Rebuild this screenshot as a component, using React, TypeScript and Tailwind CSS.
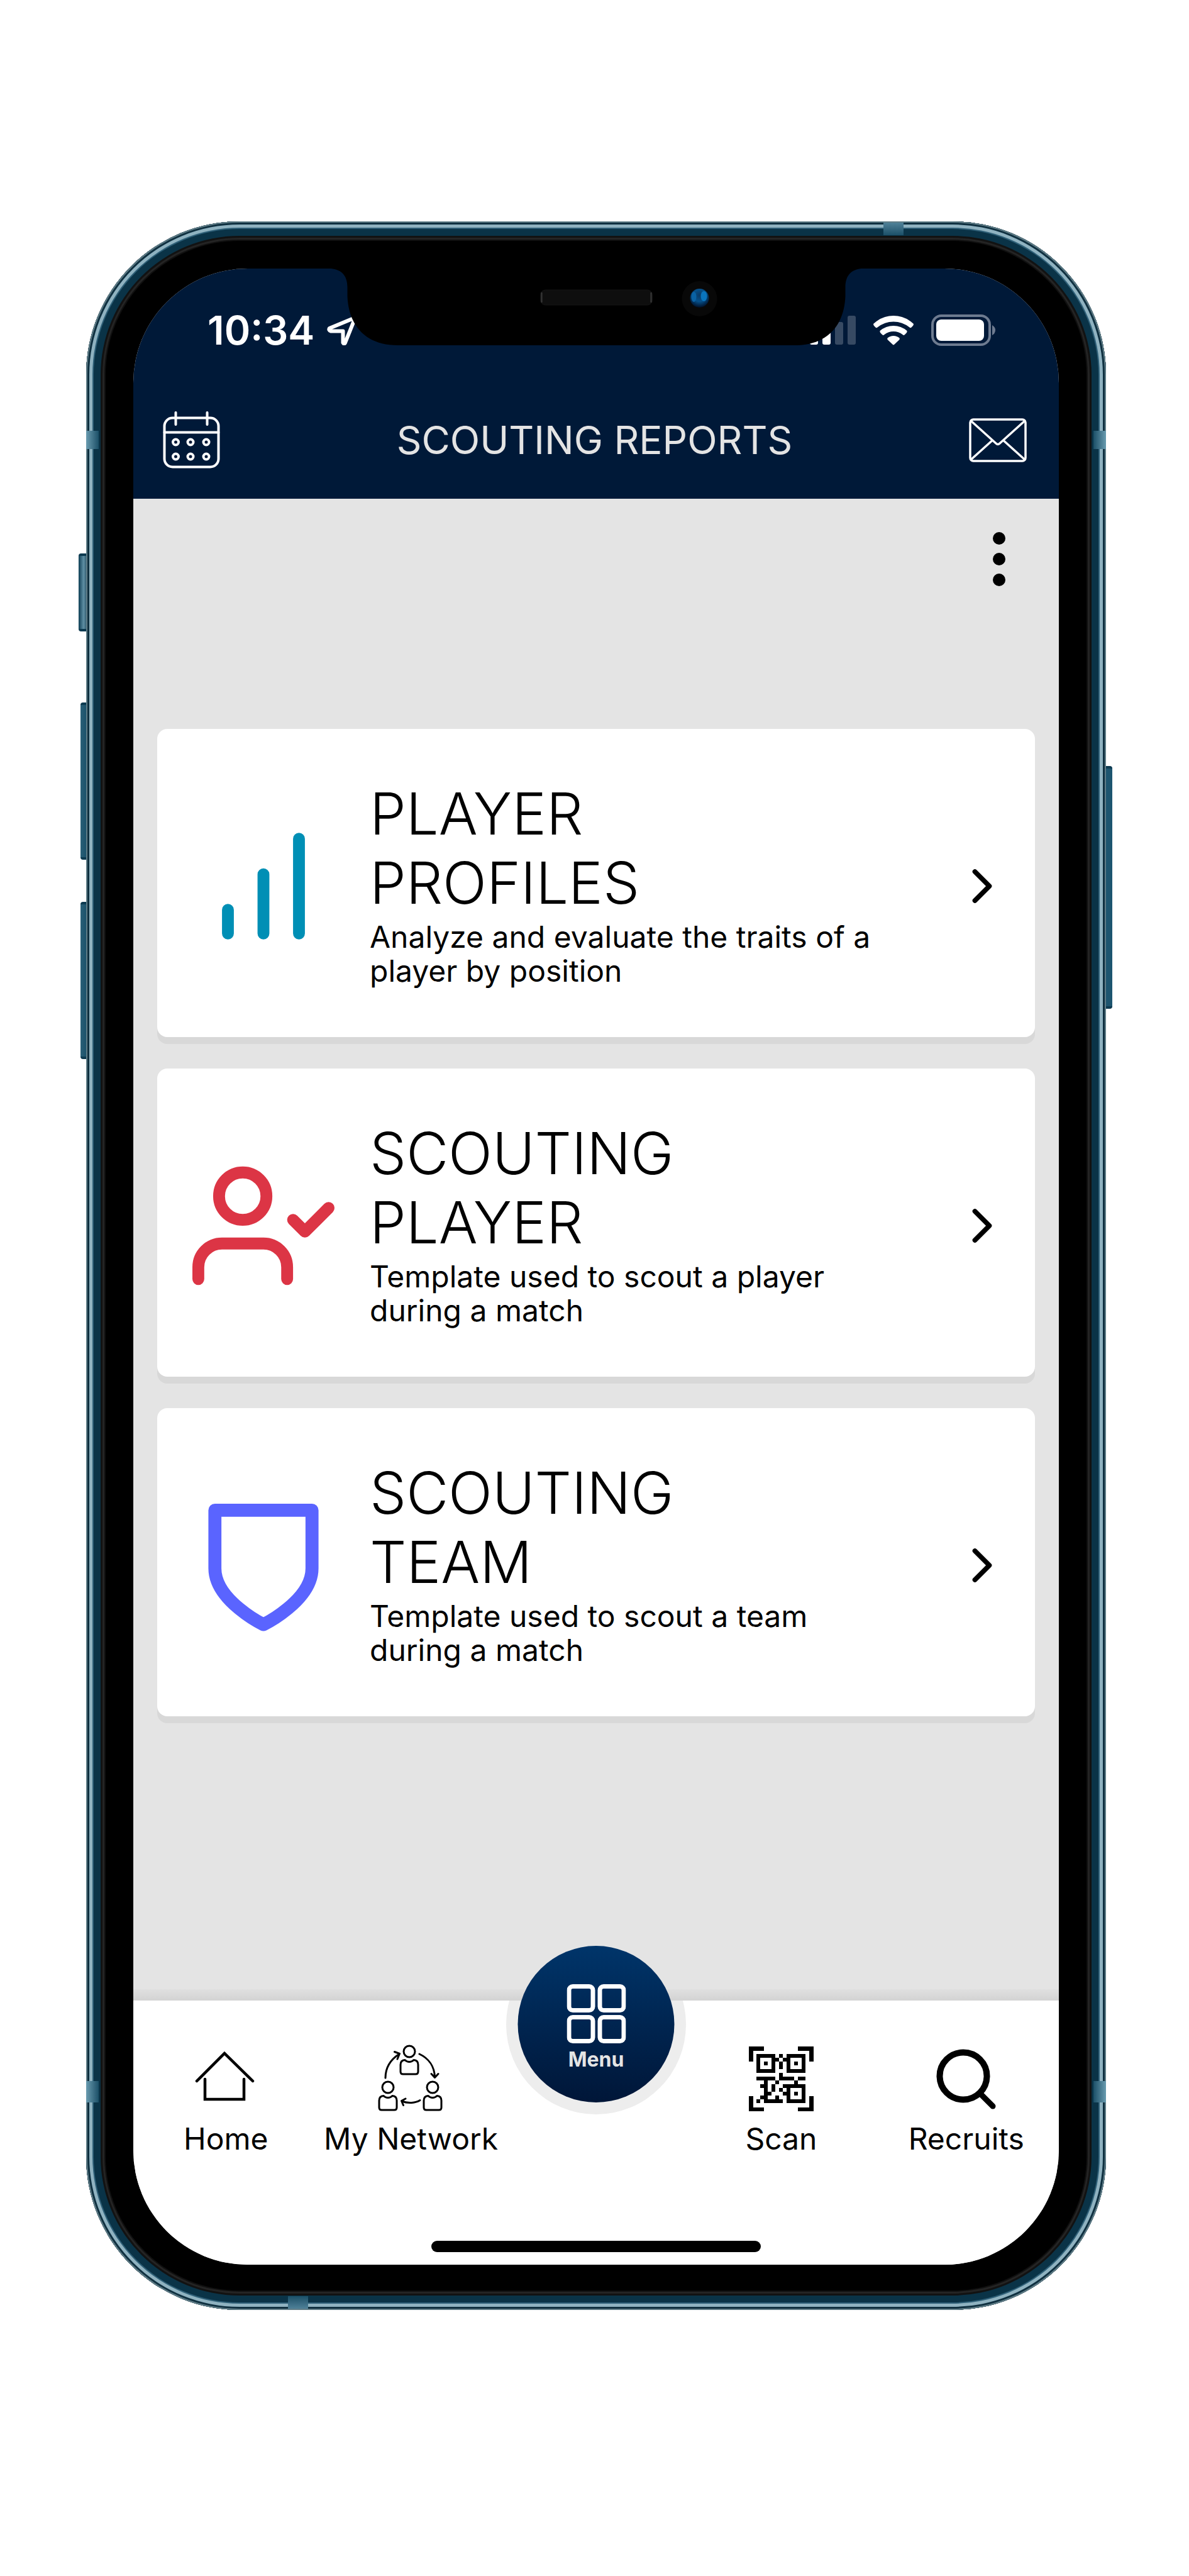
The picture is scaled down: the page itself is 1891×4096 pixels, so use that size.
import type { ReactNode } from "react";

const FRAME_SHADOW =
  "shadow-[inset_0_0_0_2px_#5f7c86,inset_0_0_0_5px_#0f3040,inset_0_0_0_10px_#8fb2c0,inset_0_0_0_12px_#2f6078,inset_0_0_0_23px_#0a3347,inset_0_0_0_26px_#121212,inset_0_0_0_29px_#242424,inset_0_0_0_31px_#101010]";

const QR_ROWS = [
  "#####.#.#####",
  "#...##.##...#",
  "#.#.#.#.#.#.#",
  "#...#.#.#...#",
  "#####...#####",
  "......#......",
  "#####.####.##",
  "..#..#....#..",
  ".##.#..######",
  "..#.#.#.#...#",
  "..##...##.#.#",
  ".##..#..#...#",
  "#.#####.#####",
];

function LocationIcon() {
  return (
    <svg width="48" height="48" viewBox="0 0 48 48" fill="none" stroke="#fff" strokeWidth="6" strokeLinejoin="round" aria-hidden="true">
      <path d="M45 4 L4 21 Q2 24 6 25.500 H25.500 V44 Q27 47 29 44 Z" />
    </svg>
  );
}

function SignalIcon() {
  return (
    <svg width="73" height="48" viewBox="0 0 73 48" aria-hidden="true">
      <rect x="0" y="34" width="13" height="13" rx="3" fill="#fff" />
      <rect x="20" y="24" width="13" height="23" rx="3" fill="#fff" />
      <rect x="40" y="11" width="13" height="36" rx="3" fill="#374a63" />
      <rect x="60" y="1" width="13" height="46" rx="3" fill="#374a63" />
    </svg>
  );
}

function WifiIcon() {
  return (
    <svg width="64" height="48" viewBox="0 0 64 48" fill="#fff" aria-hidden="true">
      <path d="M0 14 Q14 1 32 1 Q50 1 64 14 Q64 16 62.500 17.500 L60 20 Q58.500 20.500 57.500 19.500 Q46 10.500 32 10.500 Q18 10.500 6.500 19.500 Q5.500 20.500 4 20 L1.500 17.500 Q0 16 0 14 Z" />
      <path d="M10.500 25 Q20 17 32 17 Q44 17 53.500 25 Q54 27 52.500 28.500 L49.500 31.500 Q48 32.500 46.500 31 Q40 26 32 26 Q24 26 17.500 31 Q16 32.500 14.500 31.500 L11.500 28.500 Q10 27 10.500 25 Z" />
      <path d="M22.500 36.500 Q26.500 33 32 33 Q37.500 33 41.500 36.500 Q42.500 38 41 39.500 L33 47 Q32 47.800 31 47 L23 39.500 Q21.500 38 22.500 36.500 Z" />
    </svg>
  );
}

function BatteryIcon() {
  return (
    <svg width="102" height="50" viewBox="0 0 102 50" aria-hidden="true">
      <rect x="2" y="2" width="91" height="46" rx="14" fill="none" stroke="#6e7b90" strokeWidth="4" />
      <rect x="8" y="8" width="76" height="34" rx="8" fill="#fff" />
      <path d="M97 17 Q102 20 102 25 Q102 30 97 33 Z" fill="#6e7b90" />
    </svg>
  );
}

function CalendarIcon() {
  return (
    <svg width="91" height="92" viewBox="0 0 91 92" fill="none" stroke="#fff" strokeWidth="4" strokeLinecap="round" aria-hidden="true">
      <rect x="2.500" y="10.500" width="86" height="78" rx="13" />
      <path d="M2.500 33.500 H88.500 M20.500 2 V21 M70.500 2 V21" />
      {[49, 72].map((cy) => [20.5, 44, 69].map((cx) => <circle key={`${cx}-${cy}`} cx={cx} cy={cy} r="4.500" />))}
    </svg>
  );
}

function MailIcon() {
  return (
    <svg width="92" height="70" viewBox="0 0 92 70" fill="none" stroke="#fff" strokeWidth="3.500" strokeLinejoin="round" aria-hidden="true">
      <rect x="2" y="2" width="88" height="66" rx="5" />
      <path d="M3 4 L43 40 Q46 43 49 40 L89 4 M3 66 L37.500 35 M89 66 L54.500 35" />
    </svg>
  );
}

function Notch() {
  return (
    <svg className="absolute left-1/2 top-0 -translate-x-1/2" width="843" height="126" viewBox="0 0 843 126" aria-hidden="true">
      <defs>
        <radialGradient id="lens" cx="0.5" cy="0.35" r="0.65">
          <stop offset="0" stopColor="#0a3a66" />
          <stop offset="0.5" stopColor="#06518c" />
          <stop offset="1" stopColor="#001028" />
        </radialGradient>
      </defs>
      <path
        d="M0 0 H843 C828 2 818 10 818 30 V44 C816 92 788 122 738 122 H106 C56 122 28 92 26 44 V30 C26 10 16 2 0 0 Z"
        fill="#000"
      />
      <rect x="333" y="34" width="178" height="24" rx="8" fill="#0e0e0e" stroke="#151515" strokeWidth="1" />
      <path d="M335 38 V54 M509 38 V54" stroke="#3a3a3a" strokeWidth="2" />
      <circle cx="586" cy="48" r="28" fill="#080808" />
      <circle cx="586" cy="47" r="15" fill="url(#lens)" />
      <ellipse cx="593" cy="44" rx="5" ry="8" fill="#0a74bd" />
      <ellipse cx="577" cy="45" rx="4" ry="8" fill="#0a62a4" />
    </svg>
  );
}

function ReportIcon({ children, color }: { children: ReactNode; color: string }) {
  return (
    <svg
      className="shrink-0"
      width="226"
      height="226"
      viewBox="0 0 24 24"
      fill="none"
      stroke={color}
      strokeWidth="2"
      strokeLinecap="round"
      strokeLinejoin="round"
      aria-hidden="true"
    >
      {children}
    </svg>
  );
}

type Report = { title: string[]; text: string[]; icon: ReactNode };

const REPORTS: Report[] = [
  {
    title: ["PLAYER", "PROFILES"],
    text: ["Analyze and evaluate the traits of a", "player by position"],
    icon: (
      <ReportIcon color="#008fb5">
        <path d="M6 20v-4M12 20V10M18 20V4" />
      </ReportIcon>
    ),
  },
  {
    title: ["SCOUTING", "PLAYER"],
    text: ["Template used to scout a player", "during a match"],
    icon: (
      <ReportIcon color="#dc3545">
        <path d="M16 21v-2a4 4 0 0 0-4-4H5a4 4 0 0 0-4 4v2" />
        <circle cx="8.500" cy="7" r="4" />
        <path d="M17 11l2 2 4-4" />
      </ReportIcon>
    ),
  },
  {
    title: ["SCOUTING", "TEAM"],
    text: ["Template used to scout a team", "during a match"],
    icon: (
      <ReportIcon color="#5a64ff">
        <path d="M12 22s8.200-4 8.200-9.500V2.700H3.800v9.800c0 5.500 8.200 9.500 8.200 9.500z" strokeWidth="2.200" />
      </ReportIcon>
    ),
  },
];

function ReportCard({ title, text, icon }: Report) {
  return (
    <a href="#" className="flex h-[490px] items-center rounded-2xl bg-white pl-14 pr-[38px] pt-2.5 shadow-[0_11px_0_#d8d8d8]">
      {icon}
      <span className="ml-14 flex-1 pb-2">
        <span className="block pb-1 text-[92px] font-light leading-[110px]">
          {title.map((line) => (
            <span key={line} className="block">{line}</span>
          ))}
        </span>
        <span className="block text-[48px] leading-[54px]">
          {text.map((line) => (
            <span key={line} className="block whitespace-nowrap">{line}</span>
          ))}
        </span>
      </span>
      <svg className="shrink-0" width="92" height="92" viewBox="0 0 24 24" fill="none" stroke="#000" strokeWidth="2" strokeLinecap="round" strokeLinejoin="round" aria-hidden="true">
        <path d="M9 18l6-6-6-6" />
      </svg>
    </a>
  );
}

function Person({ x, y }: { x: number; y: number }) {
  return (
    <g transform={`translate(${x} ${y})`}>
      <circle cx="0" cy="0" r="9" />
      <path d="M-7 13.500 Q-14 14 -14 21 V32 Q-14 36 -10 36 H10 Q14 36 14 32 V21 Q14 14 7 13.500 Q4 16.500 0 16.500 Q-4 16.500 -7 13.500 Z" />
    </g>
  );
}

const homeIcon = (
  <path d="M7 58 L51 14 L96 58 M20 55 V87 H82 V55" stroke="#000" strokeWidth="4.500" fill="none" strokeLinecap="round" strokeLinejoin="miter" />
);

const networkIcon = (
  <g fill="none" stroke="#000" strokeWidth="3" strokeLinecap="round" strokeLinejoin="round">
    <Person x={50} y={11} />
    <Person x={16} y={68} />
    <Person x={87} y={68} />
    <path d="M12 53 C12 37 20 24 34 15 M26.500 11.500 L34.500 14.500 L31 23" />
    <path d="M66 15 C81 22 90 35 90.500 52 M85 46.500 L90.500 52.500 L96 46.500" />
    <path d="M67 88.500 C60 93 48 94 38 90 M44 86 L37.500 89.500 L40.500 96.500" />
  </g>
);

const scanIcon = (
  <g transform="translate(1 3)" shapeRendering="crispEdges">
    <path d="M4 24 V3 H25 M79 3 H100 V24 M100 79 V100 H79 M25 100 H4 V79" fill="none" stroke="#000" strokeWidth="7" />
    {QR_ROWS.flatMap((row, r) =>
      row.split("").map((cell, c) =>
        cell === "#" ? <rect key={`${r}-${c}`} x={13 + c * 6} y={12 + r * 6} width="6" height="6" fill="#000" /> : null,
      ),
    )}
  </g>
);

const recruitsIcon = (
  <g fill="none" stroke="#000" strokeLinecap="round">
    <circle cx="48" cy="50" r="37.500" strokeWidth="10" />
    <path d="M76 79 L95 98" strokeWidth="9" />
  </g>
);

function NavItem({ label, children }: { label: string; children: ReactNode }) {
  return (
    <a href="#" className="flex flex-col items-center gap-4">
      <svg width="106" height="106" viewBox="0 0 106 106" aria-hidden="true">
        {children}
      </svg>
      <span className="whitespace-nowrap text-[48px] leading-[56px]">{label}</span>
    </a>
  );
}

function Phone({ children }: { children: ReactNode }) {
  return (
    <div className="relative w-full">
      <div className="absolute -left-3 top-[528px] h-[124px] w-4 rounded-l border-y-4 border-[#0d3a50] bg-linear-to-r from-[#0d4056] via-[#5f90a5] to-[#0d3446]" />
      <div className="absolute -left-[9px] top-[765px] h-[250px] w-3 rounded-l border-y-4 border-[#0d3a50] bg-linear-to-r from-[#2a6078] to-[#174d66]" />
      <div className="absolute -left-[9px] top-[1082px] h-[250px] w-3 rounded-l border-y-4 border-[#0d3a50] bg-linear-to-r from-[#2a6078] to-[#174d66]" />
      <div className="absolute -right-[10px] top-[866px] h-[386px] w-4 rounded-r border-y-4 border-[#0d3a50] bg-[#1d556f]" />
      <div className={`relative rounded-[244px] bg-black px-[75px] pb-[72px] pt-[75px] ${FRAME_SHADOW}`}>
        <div className="absolute left-0 top-[333px] h-[29px] w-5 bg-linear-to-r from-[#6a9cb0] to-[#1b5068]" />
        <div className="absolute left-0 top-[2957px] h-[34px] w-5 bg-linear-to-r from-[#6a9cb0] to-[#1b5068]" />
        <div className="absolute right-0 top-[333px] h-[29px] w-5 bg-linear-to-l from-[#6a9cb0] to-[#1b5068]" />
        <div className="absolute right-0 top-[2957px] h-[34px] w-5 bg-linear-to-l from-[#6a9cb0] to-[#1b5068]" />
        <div className="absolute right-[322px] top-[2px] h-5 w-8 bg-linear-to-b from-[#4f8198] to-[#1b5068]" />
        <div className="absolute bottom-[2px] left-[321px] h-5 w-8 bg-linear-to-t from-[#4f8198] to-[#1b5068]" />
        {children}
      </div>
    </div>
  );
}

export default function App() {
  return (
    <main className="min-h-screen bg-white pb-[422px] pl-[137px] pr-[132px] pt-[352px] font-['Inter','Liberation_Sans',sans-serif] text-black">
      <Phone>
        <div className="relative flex flex-col overflow-hidden rounded-[182px] bg-[#e4e4e4]">
          <header className="bg-[#001938] text-white">
            <div className="flex h-[196px] items-center justify-between pl-[118px] pr-[101px]">
              <div className="flex items-center gap-5">
                <span className="text-[63px] font-semibold leading-none">10:34</span>
                <LocationIcon />
              </div>
              <div className="flex items-center gap-7">
                <SignalIcon />
                <WifiIcon />
                <BatteryIcon />
              </div>
            </div>
            <div className="flex h-[170px] items-center justify-between pb-4 pl-[47px] pr-[51px]">
              <button type="button" aria-label="Calendar">
                <CalendarIcon />
              </button>
              <h1 className="text-[62px] font-normal leading-none text-[#e4e4e4]">SCOUTING REPORTS</h1>
              <button type="button" aria-label="Messages">
                <MailIcon />
              </button>
            </div>
          </header>
          <Notch />

          <div className="flex justify-end pr-[85px] pt-[53px]">
            <button type="button" aria-label="More options" className="flex h-[86px] flex-col items-center justify-between">
              <span className="size-5 rounded-full bg-black" />
              <span className="size-5 rounded-full bg-black" />
              <span className="size-5 rounded-full bg-black" />
            </button>
          </div>

          <div className="mt-[227px] flex flex-col gap-[50px] px-[38px]">
            {REPORTS.map((report) => (
              <ReportCard key={report.title.join(" ")} {...report} />
            ))}
          </div>

          <div className="mt-[434px] h-[18px] bg-linear-to-b from-[#e0e0e0] to-[#d3d3d3]" />
          <nav className="relative bg-white pb-5 pt-[70px]">
            <div className="absolute inset-0 overflow-hidden">
              <div className="absolute -top-[105px] left-1/2 size-[286px] -translate-x-1/2 rounded-full bg-[#ededed]" />
            </div>
            <div className="relative grid grid-cols-5">
              <NavItem label="Home">{homeIcon}</NavItem>
              <NavItem label="My Network">{networkIcon}</NavItem>
              <span />
              <NavItem label="Scan">{scanIcon}</NavItem>
              <NavItem label="Recruits">{recruitsIcon}</NavItem>
            </div>
            <button
              type="button"
              className="absolute -top-[87px] left-1/2 flex size-[249px] -translate-x-1/2 flex-col items-center rounded-full bg-linear-to-b from-[#00356a] to-[#001638] pt-[61px] text-[32px] font-bold leading-9 text-[#e4e4e4]"
            >
              <svg width="94" height="94" viewBox="0 0 94 94" fill="none" stroke="#fff" strokeWidth="7" aria-hidden="true">
                <rect x="3.500" y="3.500" width="38" height="38" rx="6" />
                <rect x="52.500" y="3.500" width="38" height="38" rx="6" />
                <rect x="3.500" y="52.500" width="38" height="38" rx="6" />
                <rect x="52.500" y="52.500" width="38" height="38" rx="6" />
              </svg>
              <span className="mt-2">Menu</span>
            </button>
            <div className="mx-auto mt-[134px] h-[18px] w-[524px] rounded-full bg-black" />
          </nav>
        </div>
      </Phone>
    </main>
  );
}
